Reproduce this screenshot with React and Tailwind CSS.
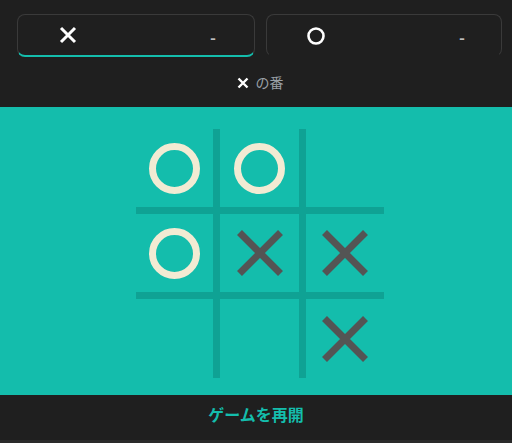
import React from "react";

const board = [
  ["o", "o", null],
  ["o", "x", "x"],
  [null, null, "x"],
];

const Cross = ({ size = 48, stroke = 7, color = "#545454" }) => (
  <svg width={size} height={size} viewBox="0 0 48 48">
    <path d="M3.5 3.5 L44.5 44.5 M44.5 3.5 L3.5 44.5" stroke={color} strokeWidth={stroke} fill="none" />
  </svg>
);

const Ring = ({ size = 51, stroke = 7, color = "#f2ebd3" }) => (
  <svg width={size} height={size} viewBox="0 0 51 51">
    <circle cx="25.5" cy="25.5" r={25.5 - stroke / 2} stroke={color} strokeWidth={stroke} fill="none" />
  </svg>
);

const PlayerCard = ({ active, width, children }) => (
  <div
    className={`flex items-center justify-between h-[43px] rounded-[8px] border border-[#3a3a3a] ${
      active ? "border-b-2 border-b-[#14bdac]" : "border-b-transparent"
    } ${width}`}
  >
    {children}
  </div>
);

const App = () => {
  return (
    <div
      className="w-[512px] h-[443px] bg-[#1f1f1f] flex flex-col"
      style={{ fontFamily: '"Noto Sans CJK JP", "Noto Sans", sans-serif' }}
    >
      {/* scores */}
      <div className="flex gap-[11px] pt-[14px] pl-[17px]">
        <PlayerCard active width="w-[238px] pl-[41px] pr-[38px]">
          <svg width="18" height="18" viewBox="0 0 18 18">
            <path d="M2 2 L16 16 M16 2 L2 16" stroke="#ffffff" strokeWidth="3" fill="none" />
          </svg>
          <span className="text-[16px] font-bold text-[#bdbdbd] leading-none pt-[3px]">-</span>
        </PlayerCard>
        <PlayerCard width="w-[236px] pl-[40px] pr-[36px]">
          <svg width="18" height="18" viewBox="0 0 18 18">
            <circle cx="9" cy="9" r="7.5" stroke="#ffffff" strokeWidth="2.6" fill="none" />
          </svg>
          <span className="text-[16px] font-bold text-[#bdbdbd] leading-none pt-[3px]">-</span>
        </PlayerCard>
      </div>

      {/* turn */}
      <div className="flex items-center justify-center gap-[7px] h-[50px] pt-[1px] pl-[8px]">
        <svg width="12" height="12" viewBox="0 0 12 12">
          <path d="M1.5 1.5 L10.5 10.5 M10.5 1.5 L1.5 10.5" stroke="#ffffff" strokeWidth="2.4" fill="none" />
        </svg>
        <span className="text-[14px] text-[#9aa0a6] leading-none -mt-[2px]">の番</span>
      </div>

      {/* board */}
      <div className="h-[288px] bg-[#14bdac] flex justify-center pt-[22px] pl-[8px]">
        <div className="grid grid-cols-[77px_79px_78px] grid-rows-[78px_78px_79px] gap-[7px] bg-[#0fa294] h-[249px] w-[248px]">
          {board.flat().map((cell, i) => (
            <div key={i} className="bg-[#14bdac] flex items-center justify-center">
              {cell === "o" && <Ring />}
              {cell === "x" && <Cross />}
            </div>
          ))}
        </div>
      </div>

      {/* restart */}
      <div className="h-[45px] flex items-center justify-center border-b-[3px] border-[#2a2a2a] box-content">
        <button className="text-[16px] font-bold text-[#14bdac] leading-none -mt-[7px]">ゲームを再開</button>
      </div>
    </div>
  );
};

export default App;
